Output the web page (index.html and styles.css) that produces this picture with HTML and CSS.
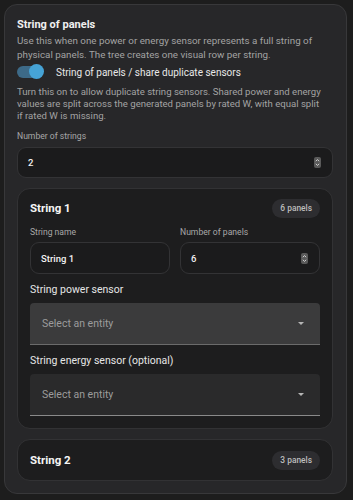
FILE: index.html
```html
<!DOCTYPE html>
<html>
<head>
<meta charset="utf-8">
<link rel="stylesheet" href="styles.css">
</head>
<body>
<section class="card">
  <h2 class="title">String of panels</h2>
  <p class="desc">Use this when one power or energy sensor represents a full string of physical panels. The tree creates one visual row per string.</p>
  <label class="toggle-row">
    <span class="switch"><span class="track"></span><span class="thumb"></span></span>
    <span class="toggle-label">String of panels / share duplicate sensors</span>
  </label>
  <p class="helper">Turn this on to allow duplicate string sensors. Shared power and energy values are split across the generated panels by rated W, with equal split if&nbsp;rated W is missing.</p>
  <div class="field">
    <div class="small-label">Number of strings</div>
    <div class="input"><span class="value">2</span><span class="spin"><svg viewBox="0 0 7 11" width="7" height="11"><rect x="0" y="0" width="7" height="11" rx="2" fill="#5a5a5a"/><path d="M1.8 4.2 L3.5 2.6 L5.2 4.2" fill="none" stroke="#ddd" stroke-width="0.9"/><path d="M1.8 6.8 L3.5 8.4 L5.2 6.8" fill="none" stroke="#ddd" stroke-width="0.9"/></svg></span></div>
  </div>

  <div class="string-card">
    <div class="string-head">
      <span class="string-title">String 1</span>
      <span class="badge">6 panels</span>
    </div>
    <div class="two-col">
      <div class="col">
        <div class="small-label">String name</div>
        <div class="input sm"><span class="value">String 1</span></div>
      </div>
      <div class="col">
        <div class="small-label">Number of panels</div>
        <div class="input sm"><span class="value">6</span><span class="spin"><svg viewBox="0 0 7 11" width="7" height="11"><rect x="0" y="0" width="7" height="11" rx="2" fill="#5a5a5a"/><path d="M1.8 4.2 L3.5 2.6 L5.2 4.2" fill="none" stroke="#ddd" stroke-width="0.9"/><path d="M1.8 6.8 L3.5 8.4 L5.2 6.8" fill="none" stroke="#ddd" stroke-width="0.9"/></svg></span></div>
      </div>
    </div>
    <div class="sensor-label">String power sensor</div>
    <div class="select hover"><span class="placeholder">Select an entity</span><span class="arrow"></span></div>
    <div class="sensor-label">String energy sensor (optional)</div>
    <div class="select"><span class="placeholder">Select an entity</span><span class="arrow"></span></div>
  </div>

  <div class="string-card collapsed">
    <div class="string-head">
      <span class="string-title">String 2</span>
      <span class="badge">3 panels</span>
    </div>
  </div>
</section>
</body>
</html>
```

FILE: styles.css
```css
* { box-sizing: border-box; }
html, body { margin: 0; }
body {
  background: #1d1d1d;
  font-family: Roboto, "Noto Sans", Arial, sans-serif;
  padding: 4px 6px 7px 4px;
  color: #e6e6e6;
}
.card {
  background: #272729;
  border: 1px solid #38383a;
  border-radius: 13px;
  padding: 13px 13px 12px 12px;
}
.title {
  margin: 0;
  font-size: 11px;
  font-weight: 700;
  line-height: 14px;
  color: #f0f0f0;
}
.desc {
  margin: 2px 0 0;
  font-size: 9.8px;
  line-height: 13.5px;
  color: #a3a3a3;
}
.toggle-row {
  display: flex;
  align-items: center;
  gap: 11px;
  margin-top: 3px;
  height: 16px;
}
.switch {
  position: relative;
  width: 28px;
  height: 16px;
  flex: none;
}
.track {
  position: absolute;
  left: 0; top: 2px;
  width: 26px; height: 12px;
  border-radius: 6px;
  background: #3d6a88;
}
.thumb {
  position: absolute;
  right: 1px; top: 0;
  width: 15px; height: 15px;
  border-radius: 50%;
  background: #46a3d6;
}
.toggle-label {
  font-size: 10px;
  color: #e8e8e8;
}
.helper {
  margin: 6px 0 0;
  font-size: 9.6px;
  line-height: 11.8px;
  color: #a3a3a3;
}
.field { margin-top: 10px; }
.small-label {
  font-size: 8.6px;
  line-height: 11px;
  color: #a8a8a8;
}
.input {
  margin-top: 5px;
  height: 31px;
  background: #1b1b1c;
  border: 1px solid #333335;
  border-radius: 9px;
  display: flex;
  align-items: center;
  justify-content: space-between;
  padding: 0 11px 0 10px;
}
.input .value {
  font-size: 9.5px;
  color: #f2f2f2;
  font-weight: 500;
}
.spin { display: flex; }
.string-card {
  margin-top: 10px;
  background: #1d1d1e;
  border: 1px solid #323234;
  border-radius: 13px;
  padding: 9px 12px 12px 12px;
}
.string-card.collapsed {
  margin-top: 10px;
  padding: 10px 12px 10px 12px;
}
.string-head {
  display: flex;
  align-items: center;
  justify-content: space-between;
  height: 20px;
}
.string-title {
  font-size: 11.5px;
  font-weight: 700;
  color: #f5f5f5;
}
.badge {
  background: #2d2d30;
  border-radius: 10px;
  height: 19px;
  padding: 0 8px;
  display: flex;
  align-items: center;
  font-size: 8.4px;
  font-weight: 500;
  color: #bdbdbd;
}
.two-col {
  display: grid;
  grid-template-columns: 1fr 1fr;
  gap: 10px;
  margin-top: 9px;
}
.input.sm { margin-top: 4px; height: 32px; }
.sensor-label {
  margin-top: 9px;
  font-size: 10.5px;
  line-height: 14px;
  color: #e6e6e6;
}
.select {
  margin-top: 6px;
  height: 42px;
  background: #2a2a2b;
  border-radius: 4px 4px 0 0;
  border-bottom: 1px solid #8a8a8a;
  display: flex;
  align-items: center;
  justify-content: space-between;
  padding: 0 16px 0 12px;
}
.select.hover { background: #3b3b3c; border-bottom-color: #6b6b6b; }
.placeholder {
  font-size: 10.5px;
  color: #9c9c9c;
}
.arrow {
  width: 0; height: 0;
  border-left: 3.5px solid transparent;
  border-right: 3.5px solid transparent;
  border-top: 3.5px solid #b5b5b5;
}
```
